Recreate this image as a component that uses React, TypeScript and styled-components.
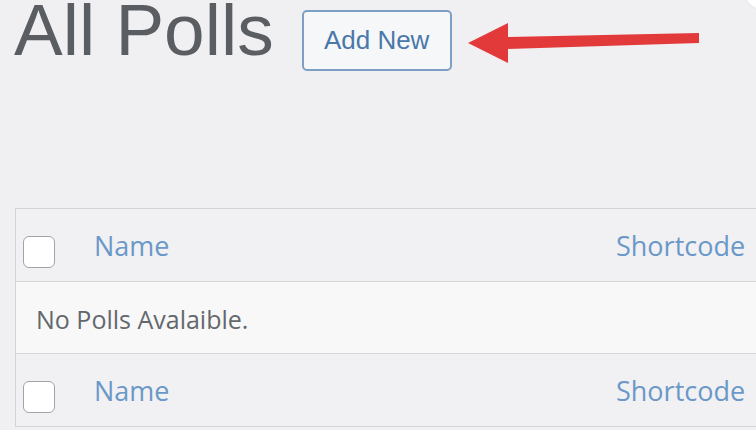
import React from "react";
import styled, { createGlobalStyle } from "styled-components";

const GlobalStyle = createGlobalStyle`
  html, body {
    margin: 0;
    padding: 0;
    background: #f0f0f2;
    overflow: hidden;
  }
  body {
    width: 756px;
    height: 430px;
    font-family: "Open Sans", "Liberation Sans", sans-serif;
  }
`;

const Page = styled.div`
  position: relative;
  width: 756px;
  height: 430px;
  overflow: hidden;
  display: flex;
  flex-direction: column;
`;

const HeaderBar = styled.div`
  display: flex;
  align-items: flex-start;
  padding-left: 14px;
  height: 71px;
`;

const Title = styled.h1`
  margin: 0;
  font-family: "Liberation Sans", Arial, sans-serif;
  font-weight: 400;
  font-size: 73px;
  line-height: 60px;
  color: #5a5e63;
  white-space: nowrap;
`;

const AddButton = styled.button`
  box-sizing: border-box;
  margin: 10px 0 0 28px;
  width: 150px;
  height: 61px;
  padding: 0;
  border: 2px solid #7e9fc4;
  border-radius: 5px;
  background: #f6f7f8;
  color: #4a78aa;
  font-family: "Liberation Sans", Arial, sans-serif;
  font-size: 26px;
  cursor: pointer;
`;

const Arrow = styled.svg`
  margin: 21px 0 0 14px;
  flex: none;
`;

const CornerBubble = styled.div`
  position: absolute;
  right: -31px;
  top: -34px;
  width: 44px;
  height: 44px;
  border-radius: 50%;
  background: #ffffff;
  box-shadow: 0 0 2px rgba(0, 0, 0, 0.12);
`;

const Table = styled.div`
  margin: 137px 0 0 15px;
  width: 790px;
  border: 1px solid #d3d4d7;
  border-right: none;
  display: flex;
  flex-direction: column;
`;

const Row = styled.div<{ $variant: "head" | "body" }>`
  box-sizing: border-box;
  display: grid;
  grid-template-columns: ${(p) => (p.$variant === "body" ? "1fr" : "78px 522px 1fr")};
  height: ${(p) => (p.$variant === "head" ? "72px" : "73px")};
  background: ${(p) => (p.$variant === "body" ? "#f8f8f9" : "#f1f1f3")};
  border-top: ${(p) => (p.$variant === "body" ? "1px solid #d6d7d9" : "none")};
  border-bottom: ${(p) => (p.$variant === "body" ? "1px solid #d6d7d9" : "none")};
`;

const CheckCell = styled.div`
  padding: 27px 0 0 7px;
`;

const Checkbox = styled.span`
  display: block;
  box-sizing: border-box;
  width: 32px;
  height: 32px;
  background: #ffffff;
  border: 1.5px solid #a2a3a6;
  border-radius: 6px;
`;

const HeadCell = styled.div`
  padding-top: 18px;
  font-size: 27px;
  line-height: 37px;
  color: #6a98c8;
  white-space: nowrap;
`;

const EmptyCell = styled.div`
  padding: 20px 0 0 20px;
  font-size: 25px;
  line-height: 34px;
  color: #64686c;
`;

const HeaderRow: React.FC = () => (
  <Row $variant="head">
    <CheckCell>
      <Checkbox />
    </CheckCell>
    <HeadCell>Name</HeadCell>
    <HeadCell>Shortcode</HeadCell>
  </Row>
);

export default function App() {
  return (
    <Page>
      <GlobalStyle />
      <HeaderBar>
        <Title>All Polls</Title>
        <AddButton>Add New</AddButton>
        <Arrow width="236" height="44" viewBox="0 0 236 44">
          <polygon points="2,22 42,2 42,42" fill="#e23a3b" />
          <polygon points="38,16 233,12 233,22 38,28" fill="#e23a3b" />
        </Arrow>
      </HeaderBar>
      <CornerBubble />
      <Table>
        <HeaderRow />
        <Row $variant="body">
          <EmptyCell>No Polls Avalaible.</EmptyCell>
        </Row>
        <HeaderRow />
      </Table>
    </Page>
  );
}
